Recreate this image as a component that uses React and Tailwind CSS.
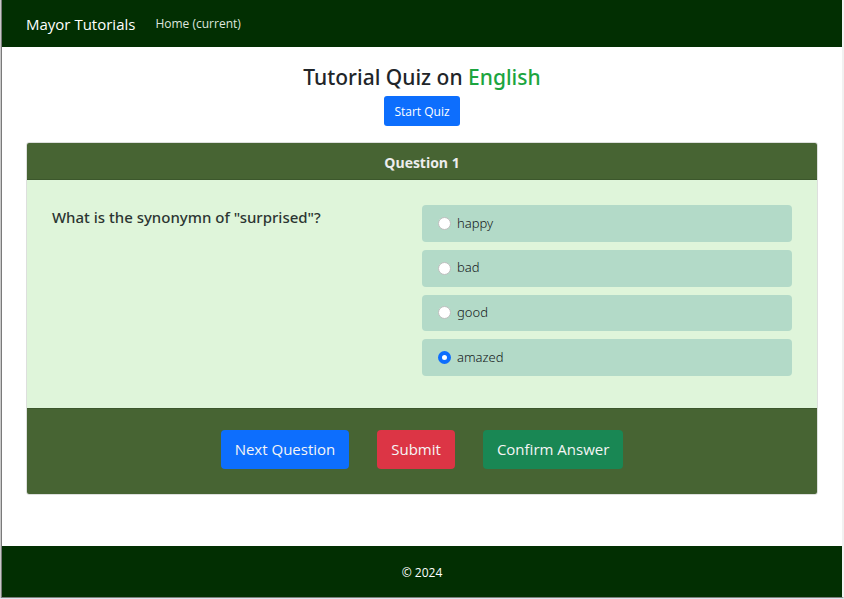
import { useState } from "react";

const options = ["happy", "bad", "good", "amazed"];

export default function App() {
  const [answer, setAnswer] = useState("amazed");

  return (
    <div className="flex min-h-screen flex-col border-b border-[#e0e3ee] bg-white font-['Open_Sans','Noto_Sans',sans-serif] text-[#212529]">
      <div className="flex flex-1 border-l border-[#c8c8c8]">
        <div className="flex flex-1 flex-col border-r-2 border-b border-l border-r-[#f1f1f1] border-b-[#7d807d] border-l-[#7a7a7a]">
          <nav className="flex h-[47px] items-center gap-5 bg-[#022f02] px-6">
            <a href="#" className="text-[15px] leading-6 text-white">
              Mayor Tutorials
            </a>
            <a href="#" className="text-[12px] leading-5 text-[#dfe6df]">
              Home (current)
            </a>
          </nav>

          <main className="flex flex-1 flex-col px-6 pt-4">
            <div className="flex flex-col items-center gap-1">
              <h1 className="font-['Noto_Sans',sans-serif] text-[21px] leading-7 font-medium">
                Tutorial Quiz on <span className="text-[#1ca53f]">English</span>
              </h1>
              <button type="button" className="mt-px h-[30px] rounded-[3px] bg-[#0d6efd] px-2.5 pt-px text-[12px] text-white">
                Start Quiz
              </button>
            </div>

            <section className="mt-4 mb-[51px] overflow-hidden rounded-[3px] border border-[#dddfdd]">
              <header className="flex h-[37px] items-center justify-center border-b border-[#3c572c] bg-[#476433] pt-0.5">
                <h2 className="text-[14px] font-bold text-[#ededed]">Question 1</h2>
              </header>

              <div className="grid grid-cols-2 bg-[#dff5da] px-[25px] pt-[25px] pb-8">
                <h3 id="question" className="font-['Noto_Sans',sans-serif] text-[15px] leading-6 font-medium text-[#2c3532]">
                  What is the synonymn of "surprised"?
                </h3>
                <div role="radiogroup" aria-labelledby="question" className="flex h-[171px] flex-col gap-2">
                  {options.map((option) => (
                    <label
                      key={option}
                      className="flex flex-1 items-center gap-1.5 rounded-[4px] bg-[#b3dac8] px-4 font-['Noto_Sans',sans-serif] text-[13px] font-light text-[#15191c]"
                    >
                      <input
                        type="radio"
                        name="answer"
                        value={option}
                        checked={answer === option}
                        onChange={() => setAnswer(option)}
                        className="size-[13px] appearance-none rounded-full border border-[#bfbfbf] bg-white checked:border-4 checked:border-[#0d6efd]"
                      />
                      {option}
                    </label>
                  ))}
                </div>
              </div>

              <footer className="flex justify-center gap-7 border-t border-[#3c572c] bg-[#476433] pt-[21px] pb-[25px] text-[15px] text-[#f5f5f5]">
                <button type="button" className="h-[39px] rounded-[4px] bg-[#0d6efd] px-3.5">
                  Next Question
                </button>
                <button type="button" className="h-[39px] rounded-[4px] bg-[#dc3545] px-3.5">
                  Submit
                </button>
                <button type="button" className="h-[39px] rounded-[4px] bg-[#198754] px-3.5">
                  Confirm Answer
                </button>
              </footer>
            </section>
          </main>

          <footer className="flex h-[51px] items-center justify-center bg-[#022f02] pt-0.5 text-[12px] text-white">
            © 2024
          </footer>
        </div>
      </div>
    </div>
  );
}
